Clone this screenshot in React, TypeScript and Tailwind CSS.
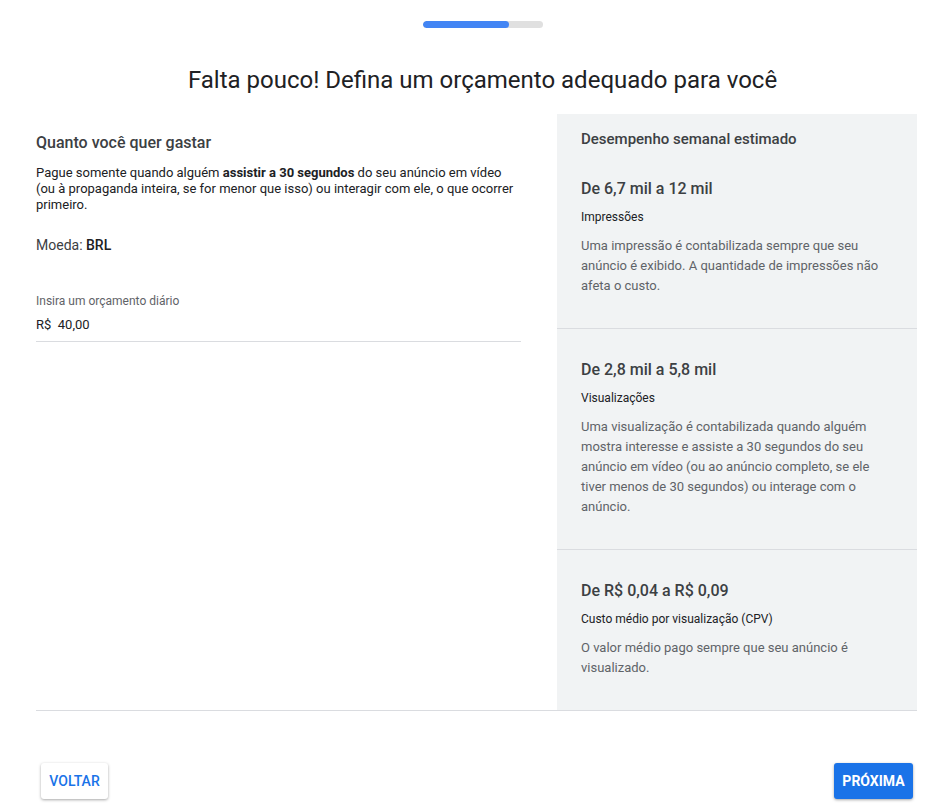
import React from "react";

const sections = [
  {
    value: "De 6,7 mil a 12 mil",
    label: "Impressões",
    desc: "Uma impressão é contabilizada sempre que seu anúncio é exibido. A quantidade de impressões não afeta o custo.",
  },
  {
    value: "De 2,8 mil a 5,8 mil",
    label: "Visualizações",
    desc: "Uma visualização é contabilizada quando alguém mostra interesse e assiste a 30 segundos do seu anúncio em vídeo (ou ao anúncio completo, se ele tiver menos de 30 segundos) ou interage com o anúncio.",
  },
  {
    value: "De R$ 0,04 a R$ 0,09",
    label: "Custo médio por visualização (CPV)",
    desc: "O valor médio pago sempre que seu anúncio é visualizado.",
  },
];

export default function App() {
  return (
    <div className="w-[925px] min-h-[807px] bg-white font-['Roboto',sans-serif] text-[#202124]">
      <div className="flex justify-center pt-[21px] pl-[40px]">
        <div className="w-[120px] h-[7px] rounded-full bg-[#e0e0e0] overflow-hidden">
          <div className="h-full w-[86px] rounded-full bg-[#4285f4]" />
        </div>
      </div>
      <h1 className="mt-[37px] pl-[40px] text-center text-[24px] leading-[30px] text-[#202124]">
        Falta pouco! Defina um orçamento adequado para você
      </h1>
      <div className="ml-[36px] w-[881px] mt-[19px] flex border-b border-[#dadce0]">
        <div className="w-[485px] pt-[19px]">
          <h2 className="text-[16px] leading-[20px] font-medium text-[#3c4043]">
            Quanto você quer gastar
          </h2>
          <p className="mt-[12px] text-[13px] leading-[16px] text-[#202124]">
            Pague somente quando alguém <b className="font-bold">assistir a 30 segundos</b> do seu anúncio em vídeo (ou à propaganda inteira, se for menor que isso) ou interagir com ele, o que ocorrer primeiro.
          </p>
          <div className="mt-[22px] text-[14px] leading-[20px] text-[#3c4043]">
            Moeda: <span className="font-medium text-[#202124]">BRL</span>
          </div>
          <div className="mt-[38px] text-[12px] leading-[16px] text-[#5f6368]">
            Insira um orçamento diário
          </div>
          <div className="mt-[8px] pb-[8px] border-b border-[#dadce0] text-[13px] leading-[16px] text-[#202124]">
            R$&nbsp;&nbsp;40,00
          </div>
        </div>
        <div className="ml-[36px] w-[360px] bg-[#f1f3f4] pt-[13px]">
          <div className="px-[24px] text-[15px] leading-[24px] font-medium text-[#3c4043]">
            Desempenho semanal estimado
          </div>
          {sections.map((s, i) => (
            <div
              key={i}
              className={
                i === 0
                  ? "px-[24px] pt-[26px] pb-[32px] border-b border-[#dadce0]"
                  : i === 1
                  ? "px-[24px] pt-[29px] pb-[32px] border-b border-[#dadce0]"
                  : "px-[24px] pt-[29px] pb-[32px]"
              }
            >
              <div className="text-[16px] leading-[24px] font-medium text-[#3c4043]">{s.value}</div>
              <div className="mt-[8px] text-[12px] leading-[16px] text-[#202124]">{s.label}</div>
              <p className="mt-[11px] text-[13px] leading-[20px] text-[#5f6368] pr-[10px]">{s.desc}</p>
            </div>
          ))}
        </div>
      </div>
      <div className="ml-[36px] w-[881px] mt-[52px] flex justify-between pl-[5px] pr-[4px]">
        <button className="h-[36px] px-[8px] min-w-[67px] rounded-[3px] bg-white text-[#1a73e8] text-[14px] font-medium shadow-[0_1px_3px_rgba(0,0,0,0.35)]">
          VOLTAR
        </button>
        <button className="h-[36px] px-[8px] min-w-[79px] rounded-[3px] bg-[#1a73e8] text-white text-[14px] font-bold shadow-[0_1px_3px_rgba(0,0,0,0.35)]">
          PRÓXIMA
        </button>
      </div>
    </div>
  );
}
